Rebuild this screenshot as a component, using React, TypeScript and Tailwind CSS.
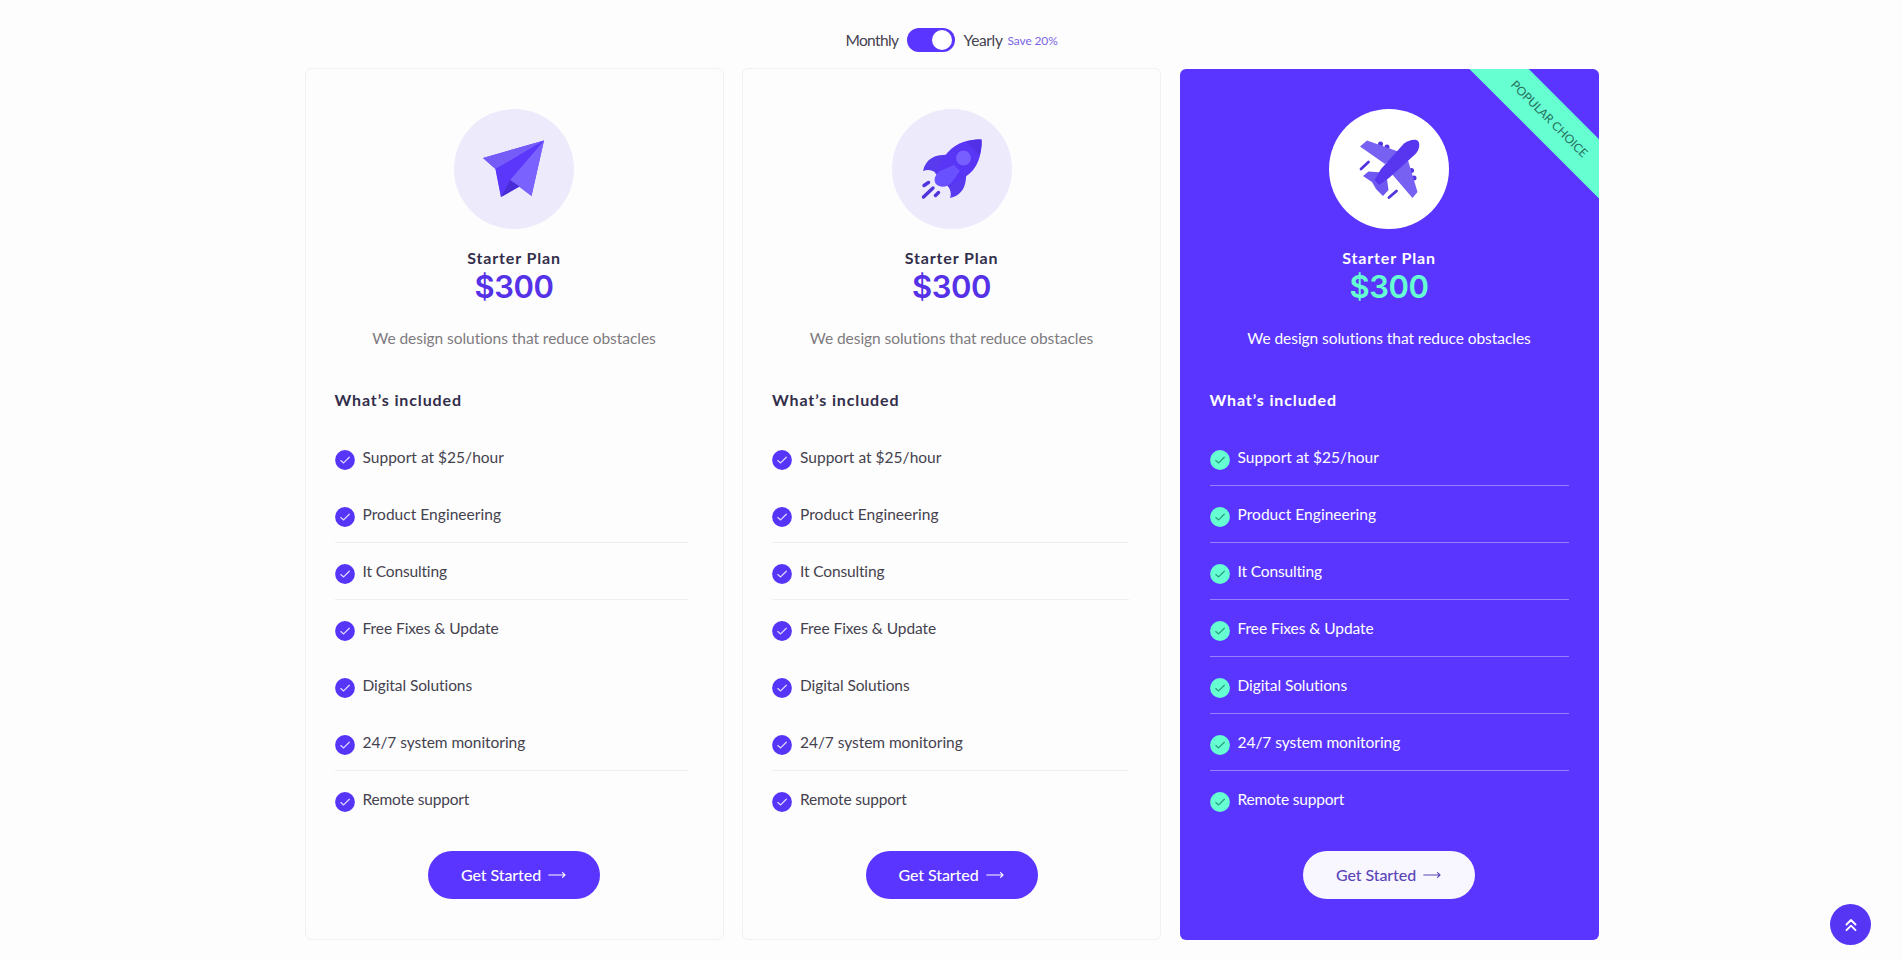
import React from "react";

type Plan = {
  id: string;
  dark?: boolean;
  icon: React.ReactNode;
  dividers: number[];
  listWidth: string;
};

const FEATURES: { label: string; tracking: string }[] = [
  { label: "Support at $25/hour", tracking: "tracking-[0.02px]" },
  { label: "Product Engineering", tracking: "tracking-[0.04px]" },
  { label: "It Consulting", tracking: "tracking-[-0.15px]" },
  { label: "Free Fixes & Update", tracking: "tracking-[-0.06px]" },
  { label: "Digital Solutions", tracking: "tracking-[-0.08px]" },
  { label: "24/7 system monitoring", tracking: "tracking-[-0.05px]" },
  { label: "Remote support", tracking: "tracking-[-0.18px]" },
];

function PaperPlane() {
  return (
    <svg viewBox="0 0 120 120" className="size-full">
      <path d="M29 49 90 31.500 77.500 87 65.500 77.500 47 88 41.500 60Z" fill="#6a4dfb" />
      <path d="M29 49 90 31.500 41.500 60Z" fill="#755cf8" />
      <path d="M90 31.500 56 71 77.500 87Z" fill="#7a62ff" />
      <path d="M90 31.500 41.500 60 47 88 56 71Z" fill="#5b36fb" />
      <path d="M47 88 56 71 65.500 77.500Z" fill="#4a2bd8" />
    </svg>
  );
}

function Rocket() {
  return (
    <svg viewBox="0 0 120 120" className="size-full">
      <path d="M58 46C46 45 34 48 31 62 36 60 41 61 45 65L58 60Z" fill="#5a3aee" />
      <path d="M74 62C75 74 72 86 58 89 60 84 58 79 54 75L62 61Z" fill="#5a3aee" />
      <path d="M89.500 30.500C90 46 86 60 73 68L57 78 43 64 52 48C61 35 74 30 89.500 30.500Z" fill="#5935f5" />
      <path d="M89.500 30.500C90 36 89.300 41 87.500 46L74 32.700C79 31 84 30.400 89.500 30.500Z" fill="#5230e6" />
      <circle cx="71.500" cy="49" r="7.500" fill="#765eff" />
      <path d="M62 56 68 62 60 73C55 79 48 79 44 75 41 71 43 66 48 62Z" fill="#6a51ff" />
      <g stroke="#5133dc" strokeWidth="3.400" strokeLinecap="round">
        <path d="M32 76.500 36.500 73.500" />
        <path d="M31.500 88 41 79" />
        <path d="M43.500 86.500 46.500 83.500" />
      </g>
    </svg>
  );
}

function Airplane() {
  return (
    <svg viewBox="0 0 120 120" className="size-full">
      <g fill="#5434e0">
        <circle cx="51.500" cy="35" r="2.500" />
        <circle cx="58" cy="38" r="2.500" />
        <circle cx="82.500" cy="61.500" r="2.500" />
        <circle cx="85" cy="69" r="2.500" />
      </g>
      <path d="M31 37.500 38 31.500 72 43.500 56 55Z" fill="#7661f3" />
      <path d="M78 48 88.500 83 83.500 89 62 64Z" fill="#7661f3" />
      <path d="M34 67 39.500 62.500 53 63.500 58 70 59.500 81 54 87 47 80 43 73Z" fill="#6f58f2" />
      <path d="M75 34.500C81 30 87 30 89 32 91 34 91 40 86.500 45L60 69 50 76 45.500 71 52 60Z" fill="#5836f0" />
      <g stroke="#5434e0" strokeWidth="2.800" strokeLinecap="round">
        <path d="M32 60 39.500 53" />
        <path d="M60 88.500 67.500 82" />
      </g>
    </svg>
  );
}

function CheckBadge({ dark }: { dark?: boolean }) {
  return (
    <svg viewBox="0 0 20 20" className="mt-[5px] size-5 shrink-0">
      <circle cx="10" cy="10" r="9.900" fill={dark ? "#66ffd1" : "#5735f8"} />
      <path
        d="M5.800 10.600 8.600 12.900 14.300 7.300"
        fill="none"
        stroke={dark ? "#2b9c83" : "#ddd6ff"}
        strokeWidth="1.300"
        strokeLinecap="round"
        strokeLinejoin="round"
      />
    </svg>
  );
}

function Arrow() {
  return (
    <svg viewBox="0 0 18 10" className="h-2.5 w-[18px]" fill="none" stroke="currentColor" strokeWidth="1.100" strokeLinecap="round" strokeLinejoin="round">
      <path d="M0.800 5H17M14.500 2.700 17 5 14.500 7.300" />
    </svg>
  );
}

const PLANS: Plan[] = [
  { id: "plane", icon: <PaperPlane />, dividers: [1, 2, 5], listWidth: "w-[353px]" },
  { id: "rocket", icon: <Rocket />, dividers: [1, 2, 5], listWidth: "w-[357px]" },
  { id: "jet", dark: true, icon: <Airplane />, dividers: [0, 1, 2, 3, 4, 5], listWidth: "w-[359px]" },
];

function PlanCard({ plan }: { plan: Plan }) {
  const { dark } = plan;
  return (
    <article
      className={`relative flex w-[419px] flex-col items-center overflow-hidden rounded-md ${
        dark
          ? "mt-px h-[871px] bg-[#5a35ff] px-[30px] pt-[39.500px] text-white"
          : "h-[872px] border border-[#f1f1f3] bg-[#fdfdfd] px-[29px] pt-[39.500px] text-[#45424f]"
      }`}
    >
      {dark && (
        <div className="absolute top-[28.500px] left-[249.500px] flex h-[42.400px] w-60 rotate-45 items-center justify-center bg-[#66ffd1] text-[12px] text-[#27705f]">
          POPULAR CHOICE
        </div>
      )}
      <div className={`size-[120px] shrink-0 rounded-full ${dark ? "bg-white" : "bg-[#edeafc]"}`}>{plan.icon}</div>
      <h3 className={`mt-[17px] text-[16px] leading-6 font-bold tracking-[0.850px] ${dark ? "" : "text-[#322e4b]"}`}>Starter Plan</h3>
      <p
        className={`-mt-px font-['Inter',sans-serif] text-[31px] leading-9 font-semibold tracking-[-0.500px] ${
          dark ? "text-[#66ffd1]" : "text-[#5531e8]"
        }`}
      >
        $300
      </p>
      <p className={`mt-[21px] text-[15.500px] leading-6 tracking-[-0.050px] ${dark ? "" : "text-[#7d7b80]"}`}>
        We design solutions that reduce obstacles
      </p>
      <h4 className={`mt-[38px] self-start text-[16px] leading-6 font-bold tracking-[0.880px] ${dark ? "" : "text-[#322e4b]"}`}>
        What’s included
      </h4>
      <ul className={`mt-[17.500px] self-start ${plan.listWidth}`}>
        {FEATURES.map((f, i) => (
          <li
            key={f.label}
            className={`flex h-[57.060px] items-center gap-2 border-b text-[15.500px] leading-6 ${f.tracking} ${
              plan.dividers.includes(i) ? (dark ? "border-[#9480ff]" : "border-[#efeff1]") : "border-transparent"
            }`}
          >
            <CheckBadge dark={dark} />
            <span>{f.label}</span>
          </li>
        ))}
      </ul>
      <button
        className={`mt-[23px] flex h-[48px] w-[172px] shrink-0 items-center justify-center gap-[7px] rounded-full pr-px pb-px text-[16px] font-medium tracking-[-0.080px] ${
          dark ? "bg-[#f8f6ff] text-[#5a45b8]" : "bg-[#5a35ff] text-white"
        }`}
      >
        Get Started
        <Arrow />
      </button>
    </article>
  );
}

export default function App() {
  return (
    <div className="relative h-[961px] w-full overflow-hidden bg-[#fdfdfd] font-['Lato',sans-serif]">
      <div className="flex h-[68px] items-start justify-center pt-7 text-[#45424f]">
        <div className="flex h-6 items-center">
          <span className="text-[15.500px] leading-6 tracking-[-0.600px]">Monthly</span>
          <button className="ml-2 flex h-6 w-[48px] items-center justify-end rounded-full bg-[#5a35ff] pr-[3px]" aria-label="Billing period">
            <span className="size-5 rounded-full bg-white" />
          </button>
          <span className="ml-[9px] text-[15.500px] leading-6 tracking-[-0.350px]">Yearly</span>
          <span className="mt-0.5 ml-[5px] text-[12px] leading-6 tracking-[-0.150px] text-[#7a66e4]">Save 20%</span>
        </div>
      </div>
      <main className="mx-auto flex w-[1294px] items-start justify-between">
        {PLANS.map((p) => (
          <PlanCard key={p.id} plan={p} />
        ))}
      </main>
      <button className="absolute top-[904px] left-[1830px] flex size-[41px] items-center justify-center rounded-full bg-[#5735f5]" aria-label="Back to top">
        <svg viewBox="0 0 12 14" className="h-3.5 w-3" fill="none" stroke="white" strokeWidth="1.900" strokeLinecap="round" strokeLinejoin="round">
          <path d="M1.500 6.500 6 2 10.500 6.500M1.500 12.200 6 7.700 10.500 12.200" />
        </svg>
      </button>
    </div>
  );
}
